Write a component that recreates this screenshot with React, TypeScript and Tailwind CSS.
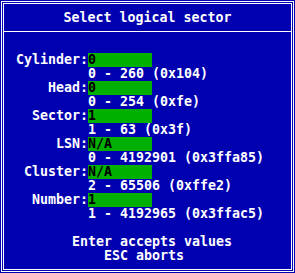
import React from 'react';

const fields = [
  { label: 'Cylinder:', value: '0', range: '0 - 260 (0x104)' },
  { label: 'Head:', value: '0', range: '0 - 254 (0xfe)' },
  { label: 'Sector:', value: '1', range: '1 - 63 (0x3f)' },
  { label: 'LSN:', value: 'N/A', range: '0 - 4192901 (0x3ffa85)' },
  { label: 'Cluster:', value: 'N/A', range: '2 - 65506 (0xffe2)' },
  { label: 'Number:', value: '1', range: '1 - 4192965 (0x3ffac5)' },
];

export default function App() {
  return (
    <div
      className="w-[295px] h-[273px] bg-[#0000b0] p-px text-white text-[13.3px] leading-[14px] font-bold whitespace-pre"
      style={{ fontFamily: '"DejaVu Sans Mono", "Liberation Mono", monospace' }}
    >
      <div className="h-full border border-white p-px">
        <div className="h-full border border-white flex flex-col">
          <div className="pt-[7px] h-[21px] text-center">Select logical sector</div>
          <div className="mt-[6px] h-px bg-white" />

          <div className="mt-[21px] flex flex-col">
            {fields.map((f) => (
              <React.Fragment key={f.label}>
                <div className="flex h-[14px]">
                  <div className="w-[84px] text-right">{f.label}</div>
                  <div className="w-[64px] bg-[#00b000] text-black">{f.value}</div>
                </div>
                <div className="h-[14px] pl-[84px]">{f.range}</div>
              </React.Fragment>
            ))}
          </div>

          <div className="mt-[14px] h-[14px] pl-[68px]">Enter accepts values</div>
          <div className="h-[14px] pl-[100px]">ESC aborts</div>
        </div>
      </div>
    </div>
  );
}
